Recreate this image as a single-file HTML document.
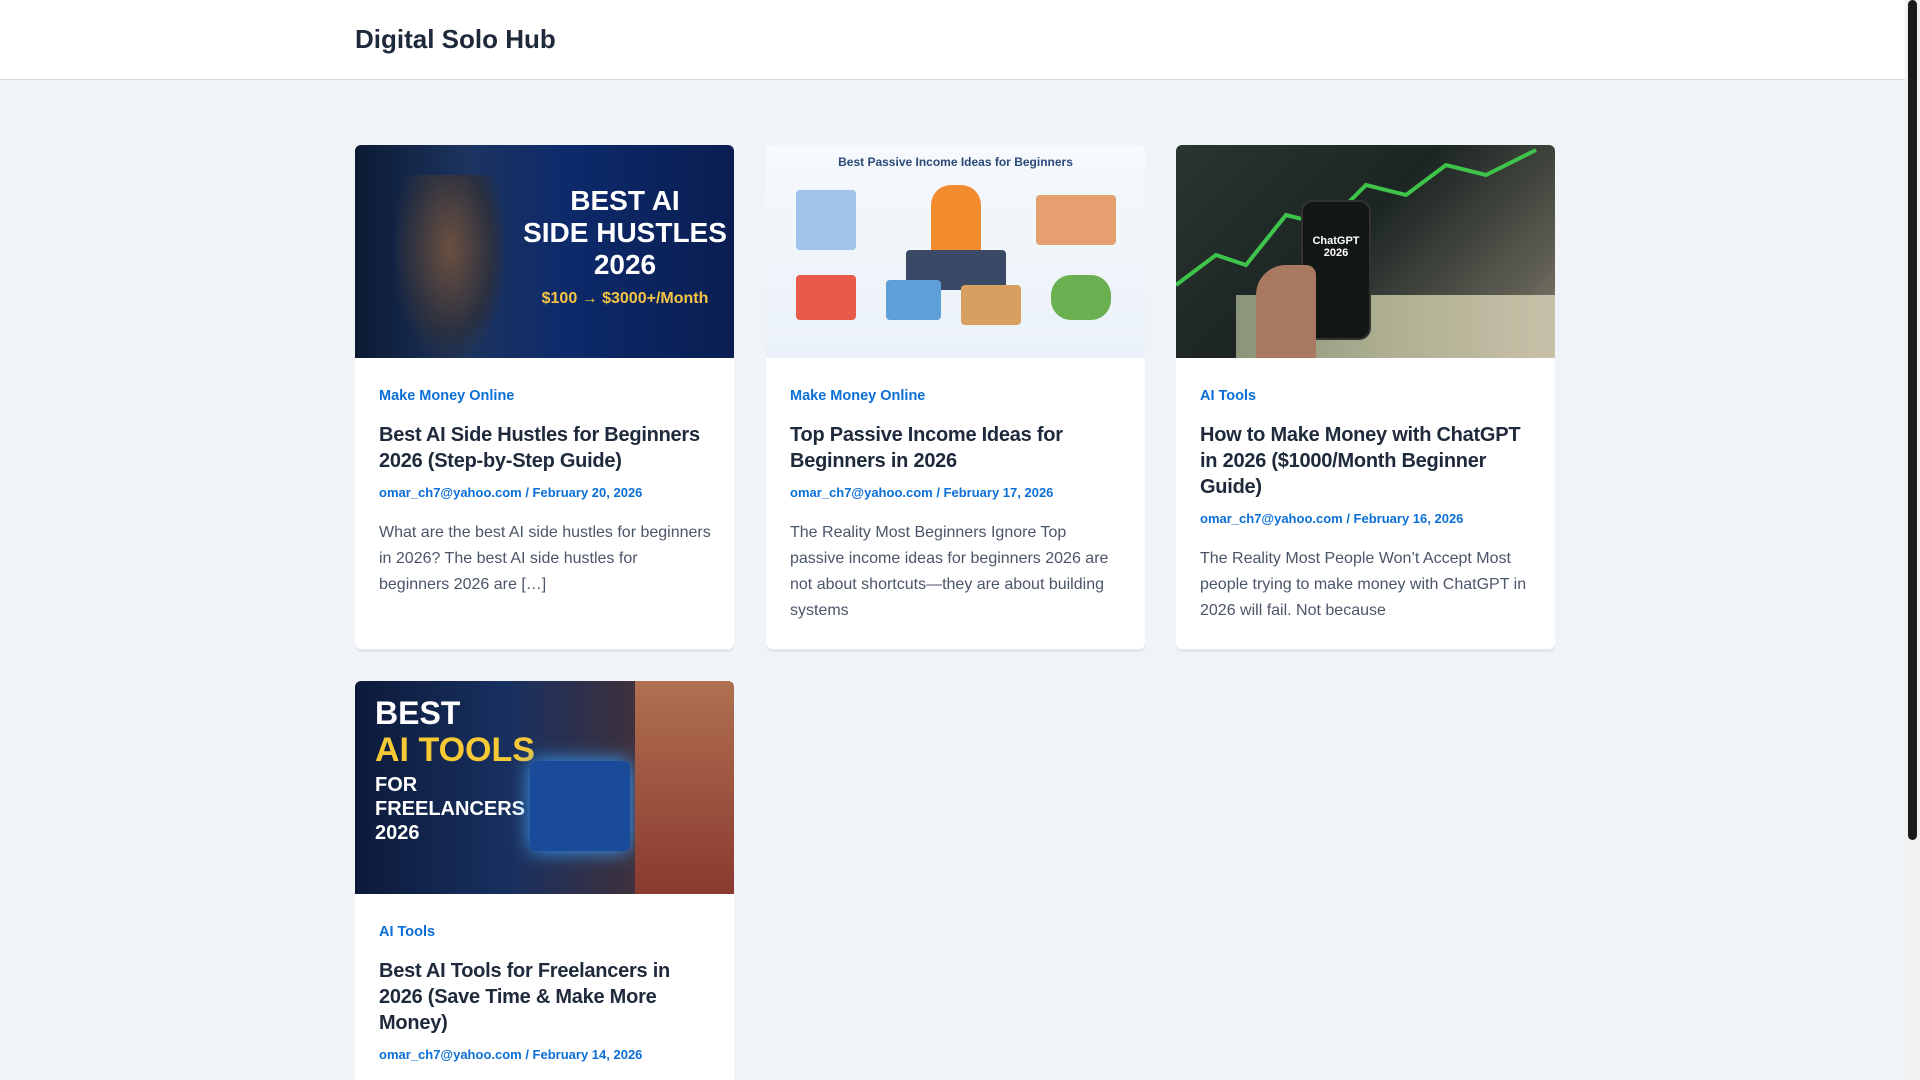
<!DOCTYPE html>
<html><head><meta charset="utf-8"><style>
*{box-sizing:border-box;margin:0;padding:0}
html,body{width:1920px;height:1080px;overflow:hidden}
body{background:#f0f4f8;font-family:"Liberation Sans",sans-serif;position:relative}
.hdr{position:absolute;left:0;top:0;width:1905px;height:80px;background:#fff;border-bottom:1px solid #d6dbe1}
.hdr h1{position:absolute;left:355px;top:24px;font-size:26px;font-weight:bold;color:#1e293b}
.sb{position:absolute;right:0;top:0;width:15px;height:1080px;background:#f1f1f1}
.sb div{position:absolute;left:3px;top:0;width:9px;height:840px;background:#1a1a1a;border-radius:5px}
.card{position:absolute;width:379px;background:#fff;border-radius:6px;box-shadow:0 3px 0 #e2e8f0;overflow:hidden}
.img{height:213px;width:100%;position:relative;overflow:hidden}
.body{padding:30px 22px 24px 24px}
.cat{color:#0b6fd6;font-size:14.5px;font-weight:bold;line-height:17px}
.t{color:#1e293b;font-size:20px;letter-spacing:-0.25px;font-weight:bold;line-height:26px;margin-top:17px}
.m{color:#0b6fd6;font-size:13px;font-weight:bold;margin-top:11px;line-height:16px;white-space:nowrap}
.e{color:#4a5568;font-size:16px;line-height:26px;margin-top:19px}
.it{position:absolute;font-weight:bold;text-align:center;white-space:nowrap}
</style></head><body>
<div class="hdr"><h1>Digital Solo Hub</h1></div>

<div class="card" style="left:355px;top:145px;height:504px">
<div class="img" style="background:linear-gradient(90deg,#0c1a33 0%,#1d3460 30%,#0d2a6b 55%,#0a1e52 100%)">
<div style="position:absolute;left:40px;top:30px;width:110px;height:183px;background:radial-gradient(ellipse at 50% 40%,#6b5040 0%,#2a3040 55%,transparent 75%)"></div>
<div class="it" style="left:160px;top:40px;width:220px;color:#fff;font-size:28px;line-height:32px">BEST AI<br>SIDE HUSTLES<br>2026</div>
<div class="it" style="left:160px;top:145px;width:220px;color:#f6c544;font-size:16px">$100 → $3000+/Month</div>
</div>
<div class="body"><div class="cat">Make Money Online</div>
<div class="t">Best AI Side Hustles for Beginners 2026 (Step-by-Step Guide)</div>
<div class="m">omar_ch7@yahoo.com / February 20, 2026</div>
<div class="e">What are the best AI side hustles for beginners in 2026? The best AI side hustles for beginners 2026 are […]</div></div></div>

<div class="card" style="left:766px;top:145px;height:504px">
<div class="img" style="background:linear-gradient(180deg,#f6f9fd,#eaf1f8)">
<div class="it" style="left:0;top:10px;width:379px;color:#2a4a78;font-size:12px">Best Passive Income Ideas for Beginners</div>
<div style="position:absolute;left:165px;top:40px;width:50px;height:70px;background:#f28a2e;border-radius:20px 20px 6px 6px"></div>
<div style="position:absolute;left:140px;top:105px;width:100px;height:40px;background:#3a4a66;border-radius:4px"></div>
<div style="position:absolute;left:30px;top:45px;width:60px;height:60px;background:#9fc3ea;border-radius:4px"></div>
<div style="position:absolute;left:270px;top:50px;width:80px;height:50px;background:#e6a070;border-radius:4px"></div>
<div style="position:absolute;left:30px;top:130px;width:60px;height:45px;background:#e85a4a;border-radius:4px"></div>
<div style="position:absolute;left:120px;top:135px;width:55px;height:40px;background:#5da0d8;border-radius:4px"></div>
<div style="position:absolute;left:195px;top:140px;width:60px;height:40px;background:#d8a060;border-radius:4px"></div>
<div style="position:absolute;left:285px;top:130px;width:60px;height:45px;background:#6ab050;border-radius:20px"></div>
</div>
<div class="body"><div class="cat">Make Money Online</div>
<div class="t">Top Passive Income Ideas for Beginners in 2026</div>
<div class="m">omar_ch7@yahoo.com / February 17, 2026</div>
<div class="e">The Reality Most Beginners Ignore Top passive income ideas for beginners 2026 are not about shortcuts—they are about building systems</div></div></div>

<div class="card" style="left:1176px;top:145px;height:504px">
<div class="img" style="background:linear-gradient(135deg,#2a3430 0%,#1c2523 45%,#5a5a50 80%,#8a8070 100%)">
<svg style="position:absolute;left:0;top:0" width="380" height="213"><polyline points="0,140 40,110 70,120 110,70 150,80 190,40 230,50 270,20 310,30 360,5" fill="none" stroke="#3ec44a" stroke-width="4"/></svg>
<div style="position:absolute;left:60px;top:150px;width:320px;height:63px;background:linear-gradient(90deg,#8a9478,#b0b094,#c8c0a8)"></div>
<div style="position:absolute;left:125px;top:55px;width:70px;height:140px;background:#121614;border-radius:12px;border:2px solid #333"></div>
<div class="it" style="left:125px;top:90px;width:70px;color:#fff;font-size:11px">ChatGPT<br>2026</div>
<div style="position:absolute;left:80px;top:120px;width:60px;height:93px;background:#a87860;border-radius:30px 10px 0 0"></div>
</div>
<div class="body"><div class="cat">AI Tools</div>
<div class="t">How to Make Money with ChatGPT in 2026 ($1000/Month Beginner Guide)</div>
<div class="m">omar_ch7@yahoo.com / February 16, 2026</div>
<div class="e">The Reality Most People Won’t Accept Most people trying to make money with ChatGPT in 2026 will fail. Not because</div></div></div>

<div class="card" style="left:355px;top:681px;height:420px">
<div class="img" style="background:linear-gradient(90deg,#0c1a3a 0%,#183060 40%,#3a3040 70%,#6a4030 100%)">
<div class="it" style="left:20px;top:15px;color:#fff;font-size:32px;line-height:34px;text-align:left">BEST</div>
<div class="it" style="left:20px;top:50px;color:#f6c935;font-size:34px;line-height:38px;text-align:left">AI TOOLS</div>
<div class="it" style="left:20px;top:92px;color:#fff;font-size:20px;line-height:24px;text-align:left">FOR<br>FREELANCERS<br>2026</div>
<div style="position:absolute;left:175px;top:80px;width:100px;height:90px;background:#1a4a9a;border-radius:6px;box-shadow:0 0 20px #3aa0ff"></div>
<div style="position:absolute;left:280px;top:0;width:100px;height:213px;background:linear-gradient(180deg,#b07050,#8a3a30)"></div>
</div>
<div class="body"><div class="cat">AI Tools</div>
<div class="t">Best AI Tools for Freelancers in 2026 (Save Time &amp; Make More Money)</div>
<div class="m">omar_ch7@yahoo.com / February 14, 2026</div></div></div>

<div class="sb"><div></div></div>
</body></html>
